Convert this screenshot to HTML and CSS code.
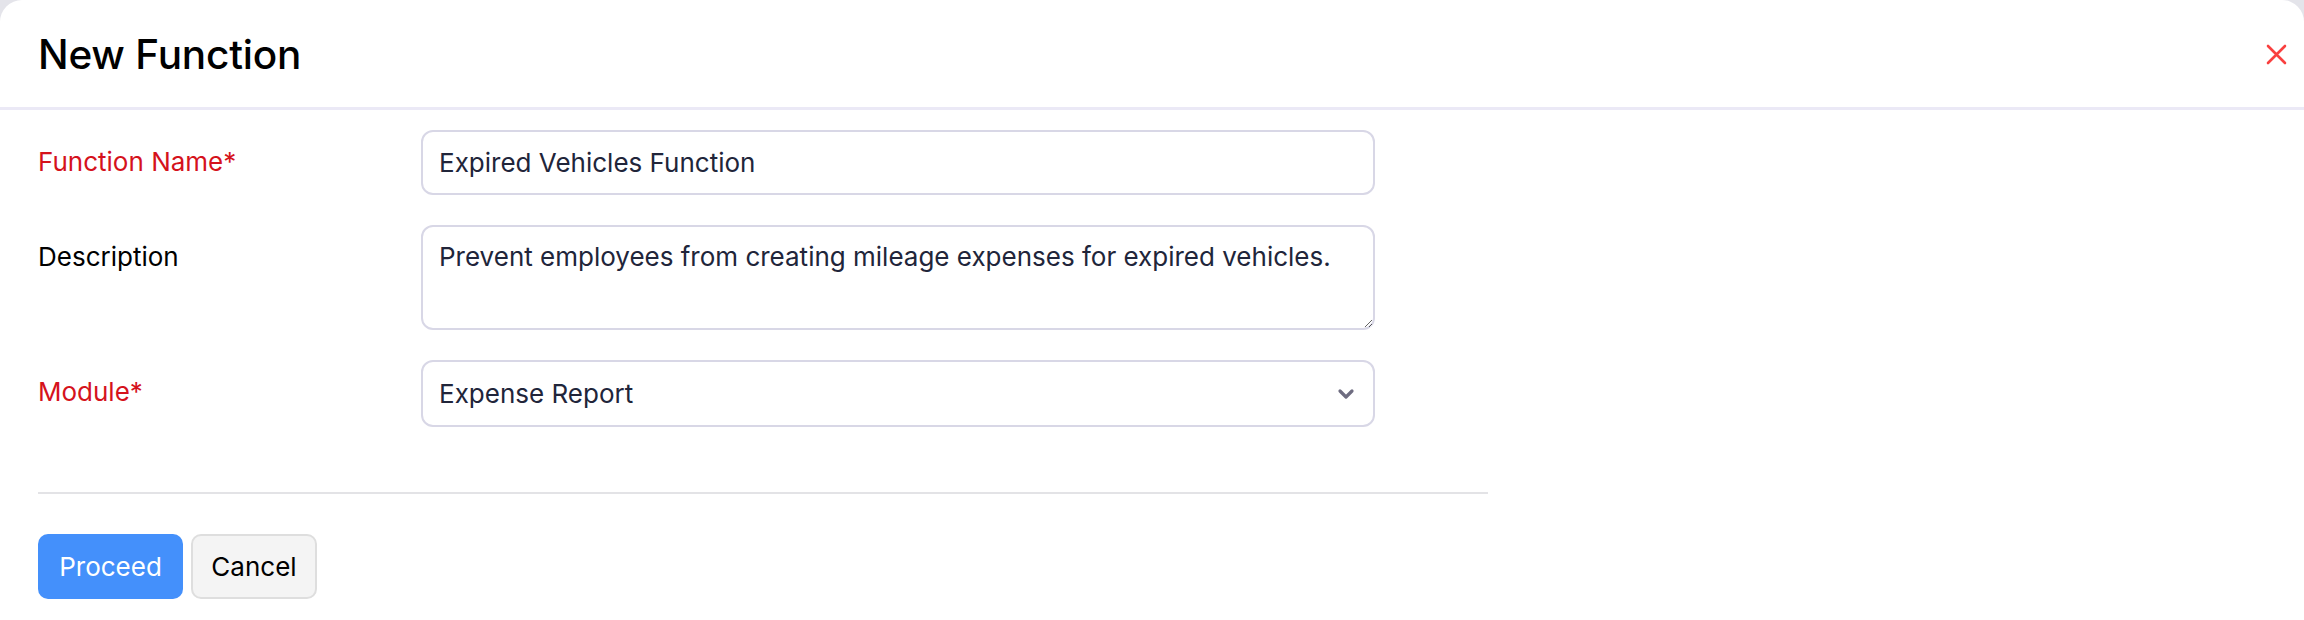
FILE: index.html
```html
<!DOCTYPE html>
<html lang="en">
<head>
<meta charset="utf-8">
<title>New Function</title>
<link rel="stylesheet" href="styles.css">
</head>
<body>
<div class="modal">
  <header class="modal-header">
    <h1 class="modal-title">New Function</h1>
    <button class="close-btn" type="button" aria-label="Close">
      <svg width="21" height="21" viewBox="0 0 21 21" aria-hidden="true">
        <path d="M2 2 L19 19 M19 2 L2 19" stroke="#f9403f" stroke-width="2.6" stroke-linecap="round" fill="none"/>
      </svg>
    </button>
  </header>
  <form class="modal-body">
    <div class="field-row">
      <label class="field-label required">Function Name*</label>
      <input class="text-input" type="text" value="Expired Vehicles Function">
    </div>
    <div class="field-row">
      <label class="field-label">Description</label>
      <textarea class="text-area">Prevent employees from creating mileage expenses for expired vehicles.</textarea>
    </div>
    <div class="field-row">
      <label class="field-label required">Module*</label>
      <div class="select-box">
        <span class="select-value">Expense Report</span>
        <svg class="chevron" width="18" height="12" viewBox="0 0 18 12" aria-hidden="true">
          <path d="M3 3 L9 9 L15 3" stroke="#6e6c80" stroke-width="3.2" stroke-linecap="round" stroke-linejoin="round" fill="none"/>
        </svg>
      </div>
    </div>
    <div class="divider"></div>
    <div class="actions">
      <button class="btn btn-primary" type="button">Proceed</button>
      <button class="btn btn-secondary" type="button">Cancel</button>
    </div>
  </form>
</div>
</body>
</html>
```
FILE: styles.css
```css
html, body {
  margin: 0;
  padding: 0;
}
body {
  background: #e4e4ea;
  font-family: Inter, "Noto Sans", sans-serif;
}
.modal {
  background: #ffffff;
  min-height: 620px;
  border-radius: 22px 22px 0 0;
  box-sizing: border-box;
}
.modal-header {
  height: 110px;
  box-sizing: border-box;
  border-bottom: 3px solid #ebe9f6;
  display: flex;
  align-items: center;
  justify-content: space-between;
  padding: 2px 17px 0 38px;
}
.modal-title {
  margin: 0;
  font-size: 40.5px;
  font-weight: 500;
  color: #000000;
  letter-spacing: -0.2px;
}
.close-btn {
  background: none;
  border: 0;
  padding: 0;
  width: 21px;
  height: 21px;
  display: flex;
  cursor: pointer;
}
.modal-body {
  padding: 20px 38px 0;
  margin: 0;
}
.field-row {
  display: flex;
  align-items: flex-start;
  margin-bottom: 30px;
}
.field-row:last-of-type {
  margin-bottom: 0;
}
.field-label {
  width: 383px;
  flex: none;
  font-size: 26px;
  line-height: 64px;
  color: #000000;
}
.field-label.required {
  color: #d5121c;
}
.text-input,
.text-area,
.select-box {
  width: 954px;
  box-sizing: border-box;
  border: 2px solid #d8d7e6;
  border-radius: 12px;
  background: #ffffff;
  font-family: Inter, "Noto Sans", sans-serif;
  font-size: 26px;
  color: #21253a;
  margin: 0;
}
.text-input {
  height: 65px;
  padding: 0 16px;
  outline: none;
}
.text-area {
  height: 105px;
  padding: 12px 16px;
  line-height: 36px;
  resize: vertical;
  outline: none;
  display: block;
}
.select-box {
  height: 67px;
  padding: 0 16px;
  display: flex;
  align-items: center;
  justify-content: space-between;
}
.chevron {
  margin-right: 2px;
}
.divider {
  width: 1450px;
  height: 2px;
  background: #e3e3e6;
  margin-top: 65px;
}
.actions {
  display: flex;
  gap: 8px;
  margin-top: 40px;
}
.btn {
  height: 65px;
  border-radius: 10px;
  font-family: Inter, "Noto Sans", sans-serif;
  font-size: 26px;
  padding: 0;
  cursor: pointer;
}
.btn-primary {
  width: 145px;
  background: #4490fb;
  border: 0;
  color: #ffffff;
}
.btn-secondary {
  width: 126px;
  background: #f4f4f4;
  border: 2px solid #dedede;
  color: #000000;
}
```
